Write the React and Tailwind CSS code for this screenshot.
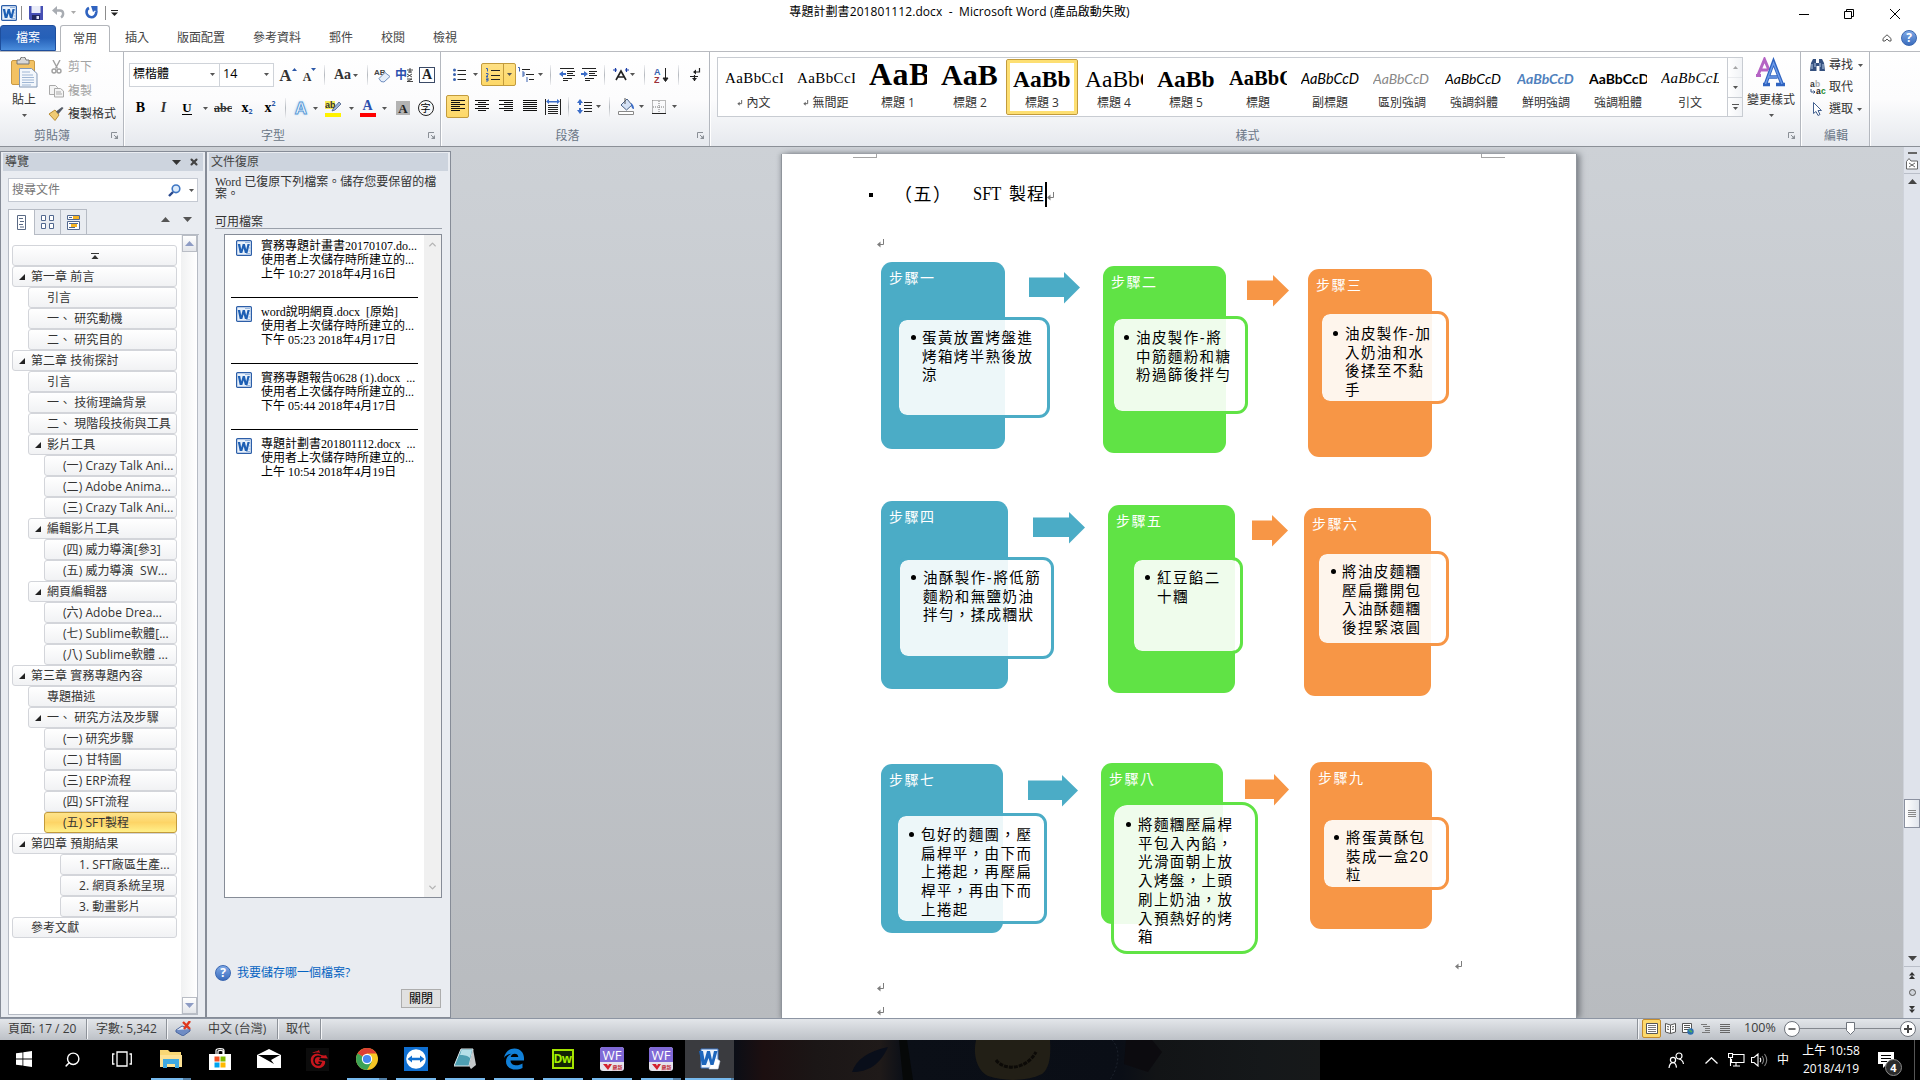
import React from "react";
import { Search, ChevronUp, ChevronDown, Minus, X } from "lucide-react";

const BLUE = "#4bacc6";
const GREEN = "#60e345";
const ORANGE = "#f79646";

/* ---------- small shared pieces ---------- */

function Caret({ className = "" }) {
  return (
    <svg width="5" height="3" viewBox="0 0 5 3" className={"shrink-0 " + className}>
      <path d="M0 0h5L2.500 3z" fill="#555" />
    </svg>
  );
}

function Cell({ className = "", children }) {
  return <div className={"flex h-full shrink-0 items-center justify-center " + className}>{children}</div>;
}

function Sep({ className = "w-[12px]" }) {
  return (
    <div className={"flex h-full shrink-0 items-center justify-center " + className}>
      <div className="h-[20px] w-px bg-linear-to-b from-[#f0f1f3] via-[#b5b9bf] to-[#f0f1f3]" />
    </div>
  );
}

function Launcher() {
  return (
    <svg width="8" height="8" viewBox="0 0 8 8">
      <path d="M.5 6V.5H6M3 3l3 3" stroke="#8a8f96" fill="none" />
      <path d="M7 3v4H3z" fill="#8a8f96" />
    </svg>
  );
}

function WordIcon({ size = 16 }) {
  return (
    <svg width={size} height={size} viewBox="0 0 16 16">
      <rect x=".6" y=".6" width="14.8" height="14.8" rx="1" fill="#e8f1fb" stroke="#2c5ea8" strokeWidth="1.2" />
      <path d="M9 2.500h5M10 13.500h4M13 5h1.500M13 8h1.500M12.500 11h2" stroke="#9cb9de" />
      <path d="M1.800 4h2.400l1 5.500L6.700 4h2.200l1.300 5.500L11.500 4h2.200l-2.200 9H8.900L7.700 8.200 6.300 13H3.700z" fill="#1d5fb4" />
    </svg>
  );
}

function ReturnMark({ className = "" }) {
  return (
    <svg width="8" height="9" viewBox="0 0 8 9" className={className}>
      <path d="M6.500 0v5.500H2" fill="none" stroke="#7d7d7d" />
      <path d="M0 5.500 3.500 2.500v6z" fill="#7d7d7d" />
    </svg>
  );
}

function HelpIcon() {
  return (
    <div className="flex size-[16px] shrink-0 items-center justify-center rounded-full border border-[#3a67b1] bg-linear-to-b from-[#7fa9e6] to-[#3a6cbd] font-['Open_Sans',sans-serif] text-[12px] leading-none font-bold text-white">
      ?
    </div>
  );
}

/* ---------- title bar and tabs ---------- */

function TitleBar() {
  return (
    <div className="flex h-[25px] items-center bg-white">
      <div className="flex h-[22px] w-[380px] items-center pl-px">
        <WordIcon />
        <div className="ml-[4px] h-[14px] w-px bg-[#8c8c8c]" />
        <svg className="ml-[7px]" width="14" height="14" viewBox="0 0 14 14">
          <path d="M0 0h14v14H1L0 13z" fill="#4650b4" />
          <path d="M2.500 0h9v7h-9z" fill="#e9ecf8" />
          <path d="M3 9h8v5H3z" fill="#20285e" />
          <path d="M7.500 10h2.500v3H7.500z" fill="#dfe3f5" />
        </svg>
        <svg className="ml-[9px]" width="13" height="13" viewBox="0 0 13 13">
          <path d="M3 4.500h5c4 0 4 5 1 7" fill="none" stroke="#a8acb2" strokeWidth="2.400" />
          <path d="M0 4.500 5 0v9z" fill="#a8acb2" />
        </svg>
        <Caret className="ml-[6px] opacity-50" />
        <svg className="ml-[9px]" width="13" height="13" viewBox="0 0 13 13">
          <path d="M4 2C.5 3.500.8 9 4.500 10.800c4 1.500 7.500-2 6.500-5.500" fill="none" stroke="#2f63c0" strokeWidth="2.600" />
          <path d="M6 0h6.500v6.500L10 4.500 8 6z" fill="#2f63c0" />
        </svg>
        <div className="ml-[7px] h-[14px] w-px bg-[#8c8c8c]" />
        <svg className="ml-[5px]" width="7" height="6" viewBox="0 0 7 6">
          <path d="M0 .5h7" stroke="#222" />
          <path d="M0 2.500h7L3.500 6z" fill="#222" />
        </svg>
      </div>
      <div className="flex h-full flex-1 items-center justify-center pb-px text-[12px] whitespace-pre text-black">
        <span className="tracking-[0.080px]">專題計劃書201801112.docx  -  Microsoft Word (產品啟動失敗)</span>
      </div>
      <div className="flex h-full w-[381px] items-center justify-end pt-[3px] pr-[20px] text-black">
        <div className="h-px w-[10px] bg-black" />
        <svg className="ml-[35px]" width="10" height="10" viewBox="0 0 10 10" fill="none" stroke="#000">
          <path d="M.5 2.500h7v7h-7zM2.500 2.500v-2h7v7h-2" />
        </svg>
        <svg className="ml-[36px]" width="10" height="10" viewBox="0 0 10 10" stroke="#000">
          <path d="M0 0l10 10M10 0L0 10" />
        </svg>
      </div>
    </div>
  );
}

function TabBar() {
  return (
    <div className="flex h-[27px] border-b border-[#b9bbc0] bg-white text-[12px] text-[#444]">
      <div className="flex h-[26px] w-[56px] items-center justify-center rounded-t-[3px] border border-[#1e4e9c] bg-linear-to-b from-[#2c62b8] via-[#2560b8] to-[#4a8ddc] text-white">檔案</div>
      <div className="ml-[4px] flex h-[27px] w-[50px] items-center justify-center rounded-t-[3px] border border-b-0 border-[#b3b6bb] bg-white pb-px">常用</div>
      <div className="flex flex-1 items-center pb-px">
        <span className="ml-[15px] w-[52px]">插入</span>
        <span className="w-[76px]">版面配置</span>
        <span className="w-[76px]">參考資料</span>
        <span className="w-[52px]">郵件</span>
        <span className="w-[52px]">校閱</span>
        <span>檢視</span>
      </div>
      <div className="flex items-center gap-[9px] pr-[3px]">
        <svg width="10" height="8" viewBox="0 0 10 8" fill="none" stroke="#555">
          <path d="M1 4.500 5 .8l4 3.700v2.500H7L5 5 3 7H1z" />
        </svg>
        <HelpIcon />
      </div>
    </div>
  );
}

/* ---------- ribbon ---------- */

function Group({ className, label, launcher = true, labelClass = "", children }) {
  return (
    <div className={"flex h-[94px] shrink-0 flex-col border-r border-[#b4b8bf] shadow-[1px_0_0_#fff] " + className}>
      <div className="h-[74px]">{children}</div>
      <div className="flex h-[19px] items-center pr-[4px] text-[12px] text-[#6a7686]">
        <span className={"flex-1 text-center " + labelClass}>{label}</span>
        {launcher && <Launcher />}
      </div>
    </div>
  );
}

function Clipboard() {
  return (
    <Group className="w-[124px]" label="剪貼簿" labelClass="pr-[7px]">
      <div className="flex h-full">
        <div className="flex w-[48px] flex-col items-center pt-[5px] text-[12px] text-[#333]">
          <svg width="27" height="31" viewBox="0 0 27 31">
            <rect x=".5" y="3.500" width="23" height="24" rx="1.500" fill="#f3c263" stroke="#c99a45" />
            <path d="M6 3h3a3 3 0 0 1 6 0h3v4H6z" fill="#d8d8d8" stroke="#777" />
            <path d="M8.500 11.500h12l5.500 5V30H8.500z" fill="#f3f7fc" stroke="#8197b5" />
            <path d="M11 15h8M11 18h11M11 20.500h12M11 23h12M11 25.500h12M11 28h9" stroke="#9fb6d4" />
          </svg>
          <span className="mt-[2px] leading-[20px]">貼上</span>
          <Caret className="mt-[4px]" />
        </div>
        <div className="flex flex-col pt-[3px] text-[12px] text-[#a3a3a3]">
          <div className="flex h-[24px] items-center">
            <svg width="20" height="14" viewBox="0 0 20 14" fill="none" stroke="#a0a0a0" strokeWidth="1.400">
              <path d="M5 0l4.500 8.500M12 0 7.500 8.500" />
              <circle cx="6" cy="11" r="2" />
              <circle cx="11" cy="11" r="2" />
            </svg>
            剪下
          </div>
          <div className="flex h-[24px] items-center">
            <svg width="20" height="14" viewBox="0 0 20 14" fill="#f4f4f4" stroke="#a9a9a9">
              <path d="M1.500 1.500h6l2 2v7h-8z" />
              <path d="M6.500 4.500h6l3 2.500v6h-9zM8 8h5M8 10h6" />
            </svg>
            複製
          </div>
          <div className="flex h-[22px] items-center text-[#333]">
            <svg width="20" height="14" viewBox="0 0 20 14">
              <path d="M1 7 7 3l4 5-4 5.500z" fill="#f0cb74" stroke="#b98d33" />
              <path d="M8 4.500 10.500 7l5-6-1.500-1z" fill="#555b66" />
            </svg>
            複製格式
          </div>
        </div>
      </div>
    </Group>
  );
}

const serif = "font-['Liberation_Serif',serif] leading-none ";

function FontGroup() {
  return (
    <Group className="w-[317px]" label="字型" labelClass="pr-[6px]">
      <div className="flex h-full flex-col pt-[11px] pl-[5px]">
        <div className="flex h-[24px] text-[12px] text-black">
          <div className="flex h-full w-[91px] items-center justify-between border border-[#cfd3d9] bg-white pr-[4px] pb-[2px] pl-[3px]">
            標楷體 <Caret />
          </div>
          <div className="-ml-px flex h-full w-[55px] items-center justify-between border border-[#cfd3d9] bg-white pr-[4px] pb-[2px] pl-[3px] text-[12.500px]">
            14 <Caret />
          </div>
          <Cell className="w-[26px] pl-[2px]">
            <span className={serif + "text-[17px] font-bold text-[#333]"}>A</span>
            <svg className="-mt-[12px]" width="5" height="3"><path d="M0 3h5L2.500 0z" fill="#2b57a7" /></svg>
          </Cell>
          <Cell className="w-[19px]">
            <span className={serif + "mt-[3px] text-[12px] font-bold text-[#333]"}>A</span>
            <svg className="-mt-[12px]" width="5" height="3"><path d="M0 0h5L2.500 3z" fill="#2b57a7" /></svg>
          </Cell>
          <Sep className="w-[11px]" />
          <Cell className="w-[32px] gap-[2px]">
            <span className={serif + "text-[14px] font-bold text-[#333]"}>Aa</span>
            <Caret />
          </Cell>
          <Sep className="w-[10px]" />
          <Cell className="w-[20px]">
            <svg width="17" height="16" viewBox="0 0 17 16">
              <text x="0" y="8" fontSize="8" fontWeight="bold" fontFamily="Liberation Sans" fill="#444">AB</text>
              <path d="M5 11.500 11 5.500l5 4-6 5.500-3-.5z" fill="#e6eefa" stroke="#6f8ec0" />
            </svg>
          </Cell>
          <Cell className="w-[22px] pl-[2px]">
            <span className="text-[12px] font-bold text-[#2b4fae]">中</span>
            <svg width="6" height="14" viewBox="0 0 6 14" stroke="#333" fill="none"><path d="M0 2h6M3 0v5M1 4l4 0M0 6l5 3M5 6 0 9M0 11h5l-5 2.500h6" strokeWidth=".9" /></svg>
          </Cell>
          <Cell className="w-[24px] pl-[2px]">
            <div className={serif + "flex size-[16px] items-center justify-center border border-[#3b4a66] bg-white text-[14px] font-bold text-[#222]"}>A</div>
          </Cell>
        </div>
        <div className="mt-[9px] flex h-[24px]">
          <Cell className="w-[23px]"><span className={serif + "text-[14px] font-bold"}>B</span></Cell>
          <Cell className="w-[23px]"><span className={serif + "text-[14px] font-bold italic text-[#333]"}>I</span></Cell>
          <Cell className="w-[24px]"><span className={serif + "border-b border-black text-[13px] font-bold"}>U</span></Cell>
          <Cell className="w-[12px]"><Caret /></Cell>
          <Cell className="w-[24px]"><span className={serif + "text-[12px] font-bold text-[#333] line-through"}>abc</span></Cell>
          <Cell className="w-[24px]"><span className={serif + "text-[14px] font-bold"}>x</span><span className="mt-[8px] text-[7px] font-bold text-[#2b57a7]">2</span></Cell>
          <Cell className="w-[22px]"><span className={serif + "text-[14px] font-bold"}>x</span><span className="mb-[8px] text-[7px] font-bold text-[#2b57a7]">2</span></Cell>
          <Sep className="w-[8px]" />
          <Cell className="w-[24px]">
            <span className="font-['Liberation_Sans',sans-serif] text-[17px] leading-none font-bold text-white [-webkit-text-stroke:1px_#5a9bd8] [text-shadow:0_0_3px_#7db7ea]">A</span>
          </Cell>
          <Cell className="w-[5px]"><Caret /></Cell>
          <Cell className="ml-[4px] w-[22px]">
            <svg width="17" height="17" viewBox="0 0 17 17">
              <path d="M0 1h10v8H0z" fill="#f5ec55" />
              <text x="0" y="8" fontSize="9" fontWeight="bold" fontFamily="Liberation Sans" fill="#333">ab</text>
              <path d="m8 9 6-7 2 2-6 6-3 1z" fill="#9db4d8" stroke="#4a5f86" strokeWidth=".8" />
              <path d="M0 13h16v4H0z" fill="#fff200" />
            </svg>
          </Cell>
          <Cell className="w-[10px] pl-[4px]"><Caret /></Cell>
          <Cell className="w-[25px] pl-[2px]">
            <div className="flex h-[17px] w-[16px] flex-col items-center justify-end border-b-4 border-[#ff0000]">
              <span className={serif + "text-[14px] font-bold text-[#2b4fae]"}>A</span>
            </div>
          </Cell>
          <Cell className="w-[10px]"><Caret /></Cell>
          <Cell className="w-[26px] pl-[2px]">
            <div className={serif + "flex size-[14px] items-center justify-center bg-[#b3b3b3] text-[13px] font-bold text-[#222]"}>A</div>
          </Cell>
          <Cell className="w-[21px]">
            <div className="flex size-[16px] shrink-0 items-center justify-center rounded-full border border-[#222] text-[10px] leading-none">字</div>
          </Cell>
        </div>
      </div>
    </Group>
  );
}

function Lines({ w = 14, rows, color = "#111" }) {
  return (
    <svg width={w} height={rows.length * 2 + 1} viewBox={`0 0 ${w} ${rows.length * 2 + 1}`} stroke={color}>
      {rows.map(([a, b], i) => <path key={i} d={`M${a} ${i * 2 + 0.5}H${b}`} />)}
    </svg>
  );
}

const selected = "rounded-[2px] border border-[#c29b3c] bg-linear-to-b from-[#fee084] to-[#fdd868] ";

function ParagraphGroup() {
  return (
    <Group className="w-[269px]" label="段落" labelClass="pr-[3px]">
      <div className="flex h-full flex-col pt-[11px]">
        <div className="flex h-[23px]">
          <Cell className="ml-[9px] w-[18px]">
            <svg width="13" height="13" viewBox="0 0 13 13"><path d="M4.500 2.500H13M4.500 6.500H13M4.500 11.500H13" stroke="#222" /><g fill="#3a63b0"><circle cx="1.500" cy="2" r="1.500" /><circle cx="1.500" cy="6.500" r="1.500" /><circle cx="1.500" cy="11.500" r="1.500" /></g></svg>
          </Cell>
          <Cell className="w-[13px] pl-[2px]"><Caret /></Cell>
          <div className={selected + "flex h-[23px] w-[35px]"}>
            <Cell className="w-[22px] border-r border-[#c29b3c]">
              <svg width="14" height="14" viewBox="0 0 14 14"><path d="M5 2.500h9M5 7.500h9M5 11.500h9" stroke="#222" /><g fill="none" stroke="#3a63b0"><path d="M0 .5h1.500v3M0 5.500h2v1.500l-2 1.500h2M0 10h2v3H0M0 11.500h2" /></g></svg>
            </Cell>
            <Cell className="w-[11px]"><Caret /></Cell>
          </div>
          <Cell className="w-[20px]">
            <svg width="17" height="15" viewBox="0 0 17 15"><path d="M4 2.500h8M8 7.500h8M11 12.500h5" stroke="#222" /><g stroke="#3a63b0" fill="none"><path d="M0 .5h1.500v4M4 5h2v4H4M4 7h2M9 10v5" /></g></svg>
          </Cell>
          <Cell className="w-[8px]"><Caret /></Cell>
          <Sep className="w-[13px]" />
          <Cell className="w-[20px]">
            <svg width="16" height="13" viewBox="0 0 16 13"><path d="M1 .5h14M8 3.500h8M8 5.500h6M8 7.500h8M4 10.500h9M4 12.500h5" stroke="#222" /><path d="M0 6l4-3v2h3v2H4v2z" fill="#3a6cc8" /></svg>
          </Cell>
          <Cell className="w-[24px]">
            <svg width="16" height="13" viewBox="0 0 16 13"><path d="M1 .5h14M8 3.500h8M8 5.500h6M8 7.500h8M4 10.500h9M4 12.500h5" stroke="#222" /><path d="M7 6 3 3v2H0v2h3v2z" fill="#3a6cc8" /></svg>
          </Cell>
          <Sep className="w-[6px]" />
          <Cell className="w-[23px] pl-[5px]">
            <svg className="shrink-0" width="16" height="13" viewBox="0 0 16 13"><path d="M3 12 8 3l5 9M5 9h6" stroke="#222" strokeWidth="1.600" fill="none" /><path d="M0 2h4M2.500 0v4M12 2h4M13.500 0v4" stroke="#1c3fa8" strokeWidth="1.200" /></svg>
          </Cell>
          <Cell className="w-[5px]"><Caret /></Cell>
          <Sep className="w-[18px]" />
          <Cell className="w-[17px]">
            <svg width="15" height="16" viewBox="0 0 15 16">
              <text x="0" y="7.500" fontSize="9" fontWeight="bold" fontFamily="Liberation Sans" fill="#3a63b0">A</text>
              <text x="0" y="16" fontSize="9" fontWeight="bold" fontFamily="Liberation Sans" fill="#9c3038">Z</text>
              <path d="M11.500 1v12M9 11l2.500 3.500L14 11z" stroke="#222" fill="#222" />
            </svg>
          </Cell>
          <Sep className="w-[16px]" />
          <Cell className="w-[19px]">
            <svg width="11" height="13" viewBox="0 0 11 13"><path d="M9.500 0v4H4M0 8.500h8M4.500 7v6" stroke="#222" fill="none" strokeWidth="1.200" /><path d="M3 4l3-2.500v5zM4.500 13 2 10h5z" fill="#222" /></svg>
          </Cell>
        </div>
        <div className="mt-[9px] flex h-[23px]">
          <div className={selected + "ml-[5px] flex h-[23px] w-[23px] items-center justify-center"}>
            <Lines rows={[[0, 14], [0, 9], [0, 14], [0, 9], [0, 14], [0, 9]]} />
          </div>
          <Cell className="w-[26px]"><Lines rows={[[0, 14], [3, 11], [0, 14], [3, 11], [0, 14], [3, 11]]} /></Cell>
          <Cell className="w-[22px]"><Lines rows={[[0, 14], [5, 14], [0, 14], [5, 14], [0, 14], [5, 14]]} /></Cell>
          <Cell className="w-[25px]"><Lines rows={[[0, 14], [0, 14], [0, 14], [0, 14], [0, 14], [0, 14]]} /></Cell>
          <Cell className="w-[22px]">
            <svg width="16" height="16" viewBox="0 0 16 16"><path d="M.5 0v16M15.500 0v16M3 6.500h10M3 8.500h10M3 10.500h10M3 12.500h10M3 14.500h10" stroke="#222" /><path d="M1 2.500 4 0v2h8V0l3 2.500L12 5V3.500H4V5z" fill="#3a6cc8" /></svg>
          </Cell>
          <Sep className="w-[8px]" />
          <Cell className="w-[24px] pl-[2px]">
            <svg width="16" height="15" viewBox="0 0 16 15"><path d="M7 3.500h8M7 6.500h8M7 9.500h8M7 12.500h8" stroke="#222" /><path d="M3 0 0 4h2v2h2V4h2zM3 15l-3-4h2V9h2v2h2z" fill="#3a6cc8" /></svg>
          </Cell>
          <Cell className="w-[5px]"><Caret /></Cell>
          <Sep className="w-[16px]" />
          <Cell className="w-[18px]">
            <svg width="17" height="17" viewBox="0 0 17 17"><path d="M3 7 9 1l5 6-5.500 5z" fill="#d5e2f6" stroke="#4a6287" /><path d="M7 0v6" stroke="#555" /><path d="M13 5c3 2 3 5 3 6-2 0-3-2-3-6z" fill="#3a6cc8" /><path d="M.5 13.500h15v3H.5z" fill="#fff" stroke="#888" /></svg>
          </Cell>
          <Cell className="w-[13px]"><Caret /></Cell>
          <Cell className="w-[22px]">
            <svg width="14" height="14" viewBox="0 0 14 14" fill="none" stroke="#777"><path d="M.5.5h13v13M.5.5v13M7 1v12M1 7h12" strokeDasharray="1 1" /><path d="M0 13.500h14" stroke="#222" /></svg>
          </Cell>
          <Cell className="w-[9px]"><Caret /></Cell>
        </div>
      </div>
    </Group>
  );
}

const styleItems = [
  ["AaBbCcI", "內文", "font-['Liberation_Serif',serif] text-[15px] tracking-[0.400px]", "mt-[10px]", true],
  ["AaBbCcI", "無間距", "font-['Liberation_Serif',serif] text-[15px] tracking-[0.400px]", "mt-[10px]", true],
  ["AaB", "標題 1", "font-['Liberation_Serif',serif] text-[32px] font-bold tracking-[0.500px]", "-mt-[4px]"],
  ["AaB", "標題 2", "font-['Liberation_Serif',serif] text-[30px] font-bold", "-mt-[2px]"],
  ["AaBb", "標題 3", "font-['Liberation_Serif',serif] text-[23.500px] font-bold", "mt-[6px]"],
  ["AaBbC", "標題 4", "font-['Liberation_Serif',serif] text-[23.500px]", "mt-[6px]"],
  ["AaBb", "標題 5", "font-['Liberation_Serif',serif] text-[23.500px] font-bold", "mt-[6px]"],
  ["AaBbC", "標題", "font-['Liberation_Serif',serif] text-[20.500px] font-bold", "mt-[7px]"],
  ["AaBbCcD", "副標題", "font-['Lato',sans-serif] text-[14.500px] italic", "mt-[11px]"],
  ["AaBbCcD", "區別強調", "font-['Lato',sans-serif] text-[14px] italic text-[#888]", "mt-[11px]"],
  ["AaBbCcD", "強調斜體", "font-['Lato',sans-serif] text-[14px] italic", "mt-[11px]"],
  ["AaBbCcD", "鮮明強調", "font-['Lato',sans-serif] text-[14px] font-bold italic text-[#4f81bd]", "mt-[11px]"],
  ["AaBbCcD", "強調粗體", "font-['Lato',sans-serif] text-[14px] font-bold", "mt-[11px]"],
  ["AaBbCcL", "引文", "font-['Liberation_Serif',serif] text-[15px] italic tracking-[0.300px]", "mt-[10px]"],
];

function StylesGroup() {
  return (
    <Group className="w-[1091px]" label="樣式" labelClass="pr-[3px]">
      <div className="flex pt-[5px] pl-[7px]">
        <div className="flex h-[60px] w-[1011px] border border-[#c8ccd2] bg-white">
          {styleItems.map(([sample, name, cls, mt, mark], i) => (
            <div
              key={i}
              className={
                "mt-px flex h-[56px] w-[72px] shrink-0 flex-col items-center rounded-[2px] " +
                (i === 4 ? "border border-[#c29b3c] shadow-[inset_0_0_0_3px_#fddf72]" : "border border-transparent")
              }
            >
              <div className="flex h-[33px] w-[58px] items-start overflow-hidden text-black">
                <div className={cls + " leading-[1.150] whitespace-nowrap " + mt}>{sample}</div>
              </div>
              <div className="mt-px flex items-center text-[12px] leading-[18px] text-[#333]">
                {mark && <svg className="mr-[3px]" width="6" height="6" viewBox="0 0 8 9"><path d="M6.500 0v5.500H2" fill="none" stroke="#666" strokeWidth="1.500" /><path d="M0 5.500 3.500 2.500v6z" fill="#666" /></svg>}
                {name}
              </div>
            </div>
          ))}
        </div>
        <div className="flex h-[60px] w-[15px] flex-col border border-l-0 border-[#c8ccd2] bg-linear-to-r from-white to-[#f1f3f6]">
          <div className="flex h-[20px] items-center justify-center border-b border-[#dadde2] opacity-50"><Caret className="rotate-180" /></div>
          <div className="flex h-[20px] items-center justify-center border-b border-[#c8ccd2]"><Caret /></div>
          <div className="flex flex-1 flex-col items-center justify-center gap-[2px]"><div className="h-px w-[7px] bg-[#555]" /><Caret /></div>
        </div>
        <div className="flex w-[56px] flex-col items-center text-[12px] text-[#333]">
          <svg width="30" height="30" viewBox="0 0 30 30">
            <path d="M0 18.500h5M2 18 8.500 2.500 13 13M5 13h7" fill="none" strokeWidth="3" stroke="#b564c4" />
            <path d="M7 27.500h7M20 27.500h9M9.500 27 17.500 5l8.500 22M12.500 20h9" fill="none" stroke="#2f63c0" strokeWidth="3.600" />
            <path d="M9.500 27 17.500 6l8.500 21M12.500 20h9" fill="none" stroke="#6d9be8" strokeWidth="1.400" />
          </svg>
          <span className="mt-[3px] leading-[20px] whitespace-nowrap">變更樣式</span>
          <Caret className="mt-[4px]" />
        </div>
      </div>
    </Group>
  );
}

function EditingGroup() {
  return (
    <Group className="w-[69px]" label="編輯" labelClass="pl-[6px]" launcher={false}>
      <div className="flex flex-col gap-[4px] pt-[4px] pl-[9px] text-[12px] text-[#333]">
        <div className="flex h-[18px] items-center">
          <svg width="15" height="14" viewBox="0 0 15 14"><path d="M1 5 3 1h3v4h3V1h3l2 4 1 8h-5.500V8h-3v5H0z" fill="#34507f" /><path d="M2 6v5M5 5v4M10 5v4M13 6v5" stroke="#b7cbe8" /></svg>
          <span className="ml-[4px]">尋找</span><Caret className="ml-[5px]" />
        </div>
        <div className="flex h-[18px] items-center">
          <svg width="16" height="15" viewBox="0 0 16 15" fontFamily="Liberation Sans" fontWeight="bold" fontSize="8.500">
            <text x="0" y="7" fill="#333">a</text><text x="5" y="7" fill="#aaa">b</text><text x="6" y="14" fill="#222">a</text><text x="11" y="14" fill="#1d8a2c">c</text>
            <path d="M1 9v3h4M3.500 10.500 5 12l-1.500 1.500" stroke="#34507f" fill="none" />
          </svg>
          <span className="ml-[3px]">取代</span>
        </div>
        <div className="flex h-[18px] items-center">
          <svg width="16" height="14" viewBox="0 0 16 14"><path d="M3.500.5v11l2.500-2 2 4 2-1-2-4h3.500z" fill="#fff" stroke="#43608f" /></svg>
          <span className="ml-[3px]">選取</span><Caret className="ml-[4px]" />
        </div>
      </div>
    </Group>
  );
}

function Ribbon() {
  return (
    <div className="flex h-[95px] border-b border-[#8b9097] bg-linear-to-b from-white via-[#fcfcfd] to-[#e6e9ee]">
      <Clipboard />
      <FontGroup />
      <ParagraphGroup />
      <StylesGroup />
      <EditingGroup />
    </div>
  );
}

/* ---------- navigation pane ---------- */

const outline = [
  [0, "第一章 前言", true], [1, "引言"], [1, "一、 研究動機"], [1, "二、 研究目的"],
  [0, "第二章 技術探討", true], [1, "引言"], [1, "一、 技術理論背景"], [1, "二、 現階段技術與工具"],
  [1, "影片工具", true], [2, "(一) Crazy Talk Ani..."], [2, "(二) Adobe Anima..."], [2, "(三) Crazy Talk Ani..."],
  [1, "編輯影片工具", true], [2, "(四) 威力導演[參3]"], [2, "(五) 威力導演  SW..."],
  [1, "網頁編輯器", true], [2, "(六) Adobe Drea..."], [2, "(七) Sublime軟體[..."], [2, "(八) Sublime軟體 ..."],
  [0, "第三章 實務專題內容", true], [1, "專題描述"], [1, "一、 研究方法及步驟", true],
  [2, "(一) 研究步驟"], [2, "(二) 甘特圖"], [2, "(三) ERP流程"], [2, "(四) SFT流程"], [2, "(五) SFT製程", false, true],
  [0, "第四章 預期結果", true], [3, "1. SFT廠區生產..."], [3, "2. 網頁系統呈現"], [3, "3. 動畫影片"], [0, "參考文獻"],
];
const indent = ["ml-0", "ml-[16px]", "ml-[32px]", "ml-[48px]"];

function ListButton({ up }) {
  return (
    <div className="flex h-[17px] w-[15px] items-center justify-center border border-[#b9bdc5] bg-linear-to-b from-white to-[#e4e6ea]">
      <svg width="9" height="5" viewBox="0 0 9 5">{up ? <path d="M0 5h9L4.500 0z" fill="#8e9cc4" /> : <path d="M0 0h9L4.500 5z" fill="#8e9cc4" />}</svg>
    </div>
  );
}

function NavigationPane() {
  return (
    <div className="flex h-[867px] w-[206px] flex-col border border-[#868c97] bg-[#e9ecf1] px-[2px] pt-px">
      <div className="flex h-[18px] items-center bg-[#cdd4de] pl-[2px] text-[12px] text-[#444]">
        <span className="flex-1">導覽</span>
        <svg width="9" height="5" viewBox="0 0 9 5"><path d="M0 0h9L4.500 5z" fill="#333" /></svg>
        <X className="mr-[4px] ml-[8px]" size={10} strokeWidth={5} color="#444" />
      </div>
      <div className="mt-[7px] ml-[5px] flex h-[24px] w-[190px] items-center border border-[#c4c9d2] bg-white pl-[3px] text-[12px] text-[#777]">
        <span className="flex-1">搜尋文件</span>
        <svg width="13" height="13" viewBox="0 0 13 13"><circle cx="8" cy="4.800" r="3.800" fill="#dcebfb" stroke="#3f77c4" strokeWidth="1.600" /><path d="M5 8 1 12" stroke="#27478c" strokeWidth="2.400" /></svg>
        <Caret className="mr-[3px] ml-[8px]" />
      </div>
      <div className="mt-[7px] ml-[5px] flex h-[26px] shrink-0">
        <div className="flex w-[27px] items-center justify-center border border-b-0 border-[#b6bbc4] bg-white">
          <svg width="9" height="15" viewBox="0 0 9 15" fill="#fff" stroke="#5a6a85"><path d="M.5.5h8v14h-8zM2 3.500h4M3 6.500h4M2 9.500h4M3 12h4" /></svg>
        </div>
        <div className="flex w-[26px] items-center justify-center border-t border-r border-b border-[#b6bbc4]">
          <svg width="13" height="14" viewBox="0 0 13 14" fill="#fff" stroke="#52688f"><path d="M.5.500h4v5h-4zM8.500.5h4v5h-4zM.5 8.500h4v5h-4zM8.500 8.500h4v5h-4z" /></svg>
        </div>
        <div className="flex w-[26px] items-center justify-center border-t border-r border-b border-[#b6bbc4]">
          <svg width="13" height="15" viewBox="0 0 13 15"><path d="M.5.500h12v4H.5zM.5 6.500h12v8H.5z" fill="#fff" stroke="#52688f" /><path d="M6 1h6v3H6zM4 9h6v3H4z" fill="#f5b324" /><path d="M2 2.500h3M2 8.500h9M2 12.500h6" stroke="#52688f" /></svg>
        </div>
        <div className="mr-[4px] flex flex-1 items-center justify-end gap-[13px] border-b border-[#b6bbc4] pr-[7px] pb-[4px]">
          <svg width="9" height="5" viewBox="0 0 9 5"><path d="M0 5h9L4.500 0z" fill="#555" /></svg>
          <svg width="9" height="5" viewBox="0 0 9 5"><path d="M0 0h9L4.500 5z" fill="#555" /></svg>
        </div>
      </div>
      <div className="ml-[5px] flex h-[780px] w-[190px] shrink-0 border border-t-0 border-[#b6bbc4] bg-white">
        <div className="w-[172px] pt-[10px] pl-[3px]">
          <div className="flex h-[21px] w-[165px] items-center justify-center rounded-[3px] border border-[#d3d5da] bg-linear-to-b from-white to-[#f1f2f4]">
            <svg width="8" height="6" viewBox="0 0 8 6"><path d="M0 .5h8" stroke="#333" /><path d="M.5 6h7L4 2z" fill="#333" /></svg>
          </div>
          <div className="flex w-[165px] flex-col">
            {outline.map(([level, text, open, active], i) => (
              <div
                key={i}
                className={
                  "flex h-[21px] items-center rounded-[3px] border text-[12px] whitespace-pre text-[#333] " +
                  indent[level] +
                  (active
                    ? " border-[#c29b3c] bg-linear-to-b from-[#fee48b] via-[#fdd466] to-[#fff08a]"
                    : " border-[#d3d5da] bg-linear-to-b from-white to-[#f1f2f4]")
                }
              >
                <span className="w-[18px] shrink-0 pl-[6px]">
                  {open && <svg width="7" height="6" viewBox="0 0 7 6"><path d="M0 6h6V0z" fill="#222" /></svg>}
                </span>
                <span className="tracking-[0.060px]">{text}</span>
              </div>
            ))}
          </div>
        </div>
        <div className="flex w-[16px] flex-col items-center justify-between bg-linear-to-r from-[#f0f1f2] to-white">
          <ListButton up />
          <ListButton />
        </div>
      </div>
    </div>
  );
}

/* ---------- recovery pane ---------- */

const files = [
  ["實務專題計畫書20170107.do...", "上午 10:27 2018年4月16日"],
  ["word說明網頁.docx  [原始]", "下午 05:23 2018年4月17日"],
  ["實務專題報告0628 (1).docx  ...", "下午 05:44 2018年4月17日"],
  ["專題計劃書201801112.docx  ...", "上午 10:54 2018年4月19日"],
];

function RecoveryPane() {
  return (
    <div className="flex h-[867px] w-[245px] flex-col border border-[#868c97] bg-[#e9ecf1] px-[2px] pt-px text-black">
      <div className="flex h-[18px] shrink-0 items-center bg-[#cdd4de] pl-[2px] text-[12px] text-[#444]">文件復原</div>
      <div className="mt-[5px] ml-[6px] h-[26px] font-['Liberation_Serif','Noto_Sans_CJK_TC',serif] text-[12px] leading-[12px] whitespace-nowrap text-[#333]">
        <div className="leading-[12px]">Word 已復原下列檔案。儲存您要保留的檔</div>
        <div className="leading-[12px]">案。</div>
      </div>
      <div className="mt-[13px] ml-[6px] flex h-[14px] w-[227px] items-center border-b border-[#9aa0aa] text-[12px] text-[#333]">可用檔案</div>
      <div className="mt-[5px] ml-[15px] flex h-[664px] w-[218px] shrink-0 border border-[#868c97] bg-white">
        <div className="flex-1 pl-[6px]">
          {files.map(([name, time], i) => (
            <div key={i} className={"flex h-[66px] w-[187px] pt-[7px] pl-[5px] " + (i === 0 ? "-mt-[3px] " : "") + (i < 3 ? "border-b border-black" : "")}>
              <div className="h-[16px] w-[25px] pt-px"><WordIcon /></div>
              <div className="font-['Liberation_Serif','Noto_Sans_CJK_TC',serif] text-[12px] leading-[14px] whitespace-pre">
                <div>{name}</div>
                <div>使用者上次儲存時所建立的...</div>
                <div>{time}</div>
              </div>
            </div>
          ))}
        </div>
        <div className="flex w-[17px] flex-col items-center justify-between bg-[#f0f0f0] py-[4px]">
          <ChevronUp size={11} strokeWidth={3} color="#b4b4b4" />
          <ChevronDown size={11} strokeWidth={3} color="#b4b4b4" />
        </div>
      </div>
      <div className="mt-[67px] ml-[6px] flex h-[16px] items-center gap-[6px] text-[12px] text-[#0563c1]">
        <HelpIcon />
        <span>我要儲存哪一個檔案?</span>
      </div>
      <div className="mt-[8px] ml-[192px] flex h-[19px] w-[40px] shrink-0 items-center justify-center border border-[#adadad] bg-[#e1e1e1] text-[12px]">關閉</div>
    </div>
  );
}

/* ---------- document ---------- */

const steps = [
  { c: BLUE, n: [881, 262, 124, 187], t: "步驟一", b: [896, 317, 154, 101], x: [911, 922, 338], l: ["蛋黃放置烤盤進", "烤箱烤半熟後放", "涼"] },
  { c: GREEN, n: [1103, 266, 123, 187], t: "步驟二", b: [1111, 316, 137, 98], x: [1124, 1136, 338], l: ["油皮製作-將", "中筋麵粉和糖", "粉過篩後拌勻"] },
  { c: ORANGE, n: [1308, 269, 124, 188], t: "步驟三", b: [1319, 311, 130, 93], x: [1333, 1345, 334], l: ["油皮製作-加", "入奶油和水", "後揉至不黏", "手"] },
  { c: BLUE, n: [881, 501, 127, 188], t: "步驟四", b: [897, 557, 157, 102], x: [911, 923, 578], l: ["油酥製作-將低筋", "麵粉和無鹽奶油", "拌勻，揉成糰狀"] },
  { c: GREEN, n: [1108, 505, 127, 188], t: "步驟五", b: [1131, 557, 112, 97], x: [1145, 1157, 578], l: ["紅豆餡二", "十糰"] },
  { c: ORANGE, n: [1304, 508, 127, 188], t: "步驟六", b: [1316, 551, 133, 95], x: [1331, 1342, 572], l: ["將油皮麵糰", "壓扁攤開包", "入油酥麵糰", "後捏緊滾圓"] },
  { c: BLUE, n: [881, 764, 122, 169], t: "步驟七", b: [895, 813, 152, 111], x: [909, 921, 835], l: ["包好的麵團，壓", "扁桿平，由下而", "上捲起，再壓扁", "桿平，再由下而", "上捲起"] },
  { c: GREEN, n: [1101, 763, 122, 161], t: "步驟八", b: [1111, 802, 147, 152], r: 16, x: [1126, 1138, 825], l: ["將麵糰壓扁桿", "平包入內餡，", "光滑面朝上放", "入烤盤，上頭", "刷上奶油，放", "入預熱好的烤", "箱"] },
  { c: ORANGE, n: [1310, 762, 122, 167], t: "步驟九", b: [1321, 817, 128, 73], x: [1334, 1346, 838], l: ["將蛋黃酥包", "裝成一盒20", "粒"] },
];

const arrows = [
  [1029, 272, 51, 35, BLUE], [1247, 275, 42, 26, ORANGE],
  [1033, 512, 52, 36, BLUE], [1252, 515, 36, 20, ORANGE],
  [1028, 775, 50, 34, BLUE], [1245, 774, 44, 29, ORANGE],
];

const marks = [[877, 239], [1455, 961], [877, 983], [877, 1007]];
const PX = 782;
const PY = 154;

function Step({ s }) {
  const [nx, ny, nw, nh] = s.n;
  const [bx, by, bw, bh] = s.b;
  const [dot, tx, ty] = s.x;
  return (
    <>
      <div
        className="absolute rounded-[11px] pt-[6px] pl-[8px] text-[14px] leading-[19px] tracking-[1.500px] text-white"
        style={{ left: nx - PX, top: ny - PY, width: nw, height: nh, background: s.c }}
      >
        {s.t}
      </div>
      <div
        className="absolute border-3 bg-white/90 bg-clip-padding"
        style={{ left: bx - PX, top: by - PY, width: bw, height: bh, borderColor: s.c, borderRadius: s.r || 11 }}
      />
      <div className="absolute size-[5px] rounded-full bg-black" style={{ left: dot - PX, top: ty - PY - 3 }} />
      <div className="absolute text-[14.500px] leading-[18.700px] tracking-[1.400px] whitespace-nowrap text-black" style={{ left: tx - PX, top: ty - PY - 9 }}>
        {s.l.map((line) => <div key={line}>{line}</div>)}
      </div>
    </>
  );
}

function Page() {
  return (
    <div className="relative ml-[331px] h-[864px] w-[794px] shrink-0 self-end bg-white font-['Lato','Noto_Sans_CJK_TC',sans-serif] shadow-[-1px_0_0_#8f949b,1px_0_0_#8f949b,4px_0_6px_rgba(60,65,72,0.550),-2px_0_4px_rgba(60,65,72,0.300)]">
      <div className="flex h-[4px] justify-between pr-[71px] pl-[71px]">
        <div className="h-[4px] w-[24px] border-r border-b border-[#a5a5a5]" />
        <div className="h-[4px] w-[24px] border-b border-l border-[#a5a5a5]" />
      </div>
      <div className="flex h-[25px] translate-y-[24px] items-center font-['Liberation_Serif','Noto_Sans_CJK_TC',serif] text-[18.667px] leading-none text-black">
        <div className="ml-[87px] size-[4px] bg-black" />
        <span className="ml-[21px] w-[77px] text-[18px] tracking-[1.500px] whitespace-nowrap">（五）</span>
        <span className="ml-[2px] w-[36px] origin-left scale-x-88">SFT</span>
        <span className="w-[36px] text-[17px] tracking-[1px] whitespace-nowrap">製程</span>
        <div className="h-[25px] w-[2px] bg-black" />
        <ReturnMark className="mt-[3px]" />
      </div>
      {steps.map((s) => <Step key={s.t} s={s} />)}
      {arrows.map(([x, y, w, neck, c], i) => (
        <svg key={i} className="absolute" style={{ left: x - PX, top: y - PY }} width={w} height="32" viewBox={`0 0 ${w} 32`}>
          <path d={`M0 5.500H${neck}V0L${w} 15.500 ${neck} 31.500V25H0z`} fill={c} />
        </svg>
      ))}
      {marks.map(([x, y], i) => (
        <div key={i} className="absolute" style={{ left: x - PX, top: y - PY }}><ReturnMark /></div>
      ))}
    </div>
  );
}

function PageScroll() {
  return (
    <div className="flex h-[871px] w-[17px] flex-col items-center border-l border-[#ced2da] bg-[#dfe3eb]">
      <div className="mt-[5px] h-[2px] w-[9px] bg-[#666]" />
      <svg className="mt-[4px]" width="12" height="12" viewBox="0 0 12 12" fill="#fff" stroke="#666"><path d="M.5 3.500 3 .5l2 2.500h6.500v8H.5z" /><path d="M3 5l6 4M9 5 3 9" /></svg>
      <div className="mt-[3px] h-px w-full bg-[#b9bec8]" />
      <svg className="mt-[5px]" width="9" height="5" viewBox="0 0 9 5"><path d="M0 5h9L4.500 0z" fill="#444" /></svg>
      <div className="mt-[615px] flex h-[29px] w-[16px] flex-col items-center justify-center gap-[1px] border border-[#8b91a0] bg-linear-to-r from-white to-[#e1e5ec]">
        <div className="h-px w-[8px] bg-[#888]" /><div className="h-px w-[8px] bg-[#888]" /><div className="h-px w-[8px] bg-[#888]" /><div className="h-px w-[8px] bg-[#888]" />
      </div>
      <svg className="mt-[128px]" width="9" height="5" viewBox="0 0 9 5"><path d="M0 0h9L4.500 5z" fill="#444" /></svg>
      <div className="mt-[5px] h-px w-full bg-[#b9bec8]" />
      <svg className="mt-[5px]" width="6" height="7" viewBox="0 0 6 7"><path d="M0 3.500 3 0l3 3.500zM0 7l3-3.500L6 7z" fill="#333" /></svg>
      <div className="mt-[10px] size-[7px] rounded-full border border-[#555] bg-[#cfd3da]" />
      <svg className="mt-[10px]" width="6" height="7" viewBox="0 0 6 7"><path d="M0 0h6L3 3.500zM0 3.500h6L3 7z" fill="#333" /></svg>
    </div>
  );
}

/* ---------- status bar ---------- */

function StatusSep() {
  return <div className="h-[20px] w-px bg-[#8d9299] shadow-[1px_0_0_#f4f5f7]" />;
}

function StatusBar() {
  return (
    <div className="flex h-[22px] items-center border-t border-[#8d95a3] bg-linear-to-b from-[#e3e6ea] to-[#bdc1c7] pb-[2px] text-[12px] whitespace-nowrap text-[#3c3c3c]">
      <div className="w-[86px] pl-[8px]">頁面: 17 / 20</div>
      <StatusSep />
      <div className="w-[79px] pl-[9px]">字數: 5,342</div>
      <StatusSep />
      <div className="flex w-[41px] pl-[8px]">
        <svg width="17" height="15" viewBox="0 0 17 15"><path d="M1 9l6-4 8 3-7 6z" fill="#e9eef8" stroke="#4b67a0" /><path d="M1 9v2l7 4 7-5V8" fill="#6f8cc4" stroke="#4b67a0" /><path d="M8 1l7 7M15 0 9 8" stroke="#e0381e" strokeWidth="2.400" /></svg>
      </div>
      <div className="w-[69px]">中文 (台灣)</div>
      <StatusSep />
      <div className="w-[42px] pl-[8px]">取代</div>
      <StatusSep />
      <div className="flex-1" />
      <StatusSep />
      <div className="ml-[4px] flex h-[19px] w-[19px] items-center justify-center rounded-[2px] border border-[#c28a2c] bg-[#fcd96c]">
        <svg width="12" height="11" viewBox="0 0 12 11"><path d="M.5.5h11v10H.5z" fill="#fff" stroke="#555" /><path d="M2 2.500h8M2 4.500h8M2 6.500h8M2 8.500h8" stroke="#777" /></svg>
      </div>
      <svg className="ml-[4px]" width="11" height="11" viewBox="0 0 11 11" fill="#fff" stroke="#555"><path d="M.5.500 5.500 2l5-1.500v8.500L5.500 10.500.5 9zM5.500 2v8.500M2 3.500l2 .5M2 6l2 .5M7 4l2-.5M7 6.500l2-.5" /></svg>
      <svg className="ml-[6px]" width="12" height="12" viewBox="0 0 12 12"><path d="M.5.500h9v9h-9zM2 2.500h6M2 4.500h6M2 6.500h4" fill="#fff" stroke="#555" /><circle cx="8.500" cy="8.500" r="3.200" fill="#2c6fb0" /><path d="M7 7l3 2" stroke="#4fae5a" strokeWidth="1.600" /></svg>
      <svg className="ml-[7px]" width="10" height="9" viewBox="0 0 10 9" stroke="#777"><path d="M0 .5h6M2 2.500h7M4 4.500h5M4 6.500h5M1 8.500h8" /></svg>
      <svg className="ml-[9px]" width="10" height="9" viewBox="0 0 10 9" stroke="#666"><path d="M0 .5h10M0 2.500h10M0 4.500h10M0 6.500h10M0 8.500h10" /></svg>
      <span className="ml-[14px] w-[40px] text-[12.500px]">100%</span>
      <div className="flex size-[16px] items-center justify-center rounded-full border border-[#6f747c] bg-white"><Minus size={10} strokeWidth={4} color="#444" /></div>
      <div className="h-px w-[46px] bg-[#84888f]" />
      <svg width="9" height="13" viewBox="0 0 9 13"><path d="M.5.500h8v8L4.500 12.500.5 8.500z" fill="#fff" stroke="#6f747c" /></svg>
      <div className="h-px w-[45px] bg-[#84888f]" />
      <div className="mr-[4px] flex size-[16px] items-center justify-center rounded-full border border-[#6f747c] bg-white">
        <svg width="8" height="8" viewBox="0 0 8 8" stroke="#444" strokeWidth="2"><path d="M4 0v8M0 4h8" /></svg>
      </div>
    </div>
  );
}

/* ---------- taskbar ---------- */

function Task({ run, active, split, first, children }) {
  return (
    <div className={"flex h-[40px] shrink-0 flex-col items-center " + (first ? "w-[48px] " : "w-[49px] ") + (active ? "bg-[#3a3b3f]" : "")}>
      <div className="flex h-[38px] w-full items-center justify-center">{children}</div>
      {run && (
        <div className={"flex h-[2px] " + (active ? "w-full" : "w-[40px]")}>
          <div className="flex-1 bg-[#76b9ed]" />
          {split && <div className={(active ? "w-[3px]" : "w-[8px]") + " bg-[#527fa6]"} />}
        </div>
      )}
    </div>
  );
}

function WFIcon() {
  return (
    <svg width="24" height="24" viewBox="0 0 24 24">
      <rect width="24" height="24" rx="3" fill="#e6e3ec" />
      <path d="M0 3a3 3 0 0 1 3-3h18a3 3 0 0 1 3 3v12H0z" fill="#8069d6" />
      <text x="12" y="13" textAnchor="middle" fontSize="13" textLength="19" lengthAdjust="spacingAndGlyphs" fontFamily="Open Sans" fill="#fff">WF</text>
      <path d="M3 17h4l1 2 1-2h3l-4 6z" fill="#d3202c" />
      <text x="12.500" y="22" fontSize="5" fontFamily="Noto Sans CJK TC" fontWeight="bold" fill="#c0303a">鼎新</text>
    </svg>
  );
}

function Wallpaper() {
  return (
    <svg className="block shrink-0" width="586" height="40" viewBox="0 0 586 40">
      <defs>
        <linearGradient id="wall" x1="0" x2="1">
          <stop offset="0" stopColor="#0b0e16" /><stop offset=".05" stopColor="#1c0f10" /><stop offset=".14" stopColor="#1b1616" />
          <stop offset=".25" stopColor="#1f1a19" /><stop offset=".29" stopColor="#0b0f17" /><stop offset=".66" stopColor="#0a0e16" />
          <stop offset=".72" stopColor="#121416" /><stop offset=".9" stopColor="#15181a" /><stop offset="1" stopColor="#17191a" />
        </linearGradient>
      </defs>
      <path d="M0 0h586v40H0z" fill="url(#wall)" />
      <path d="M154 7c-20 4-32 13-36 25 16 0 28-7 36-25z" fill="#090e1a" />
      <path d="M165 0h8l6 40h-10z" fill="#060808" />
      <path d="M242 0h74c1 14 0 28-8 34-16 8-40 7-54 2-12-6-15-22-12-36z" fill="#221f16" />
      <path d="M262 20c8 11 30 10 40-8" fill="none" stroke="#0c0a07" strokeWidth="3" strokeDasharray="4 1" />
      <path d="M378 0c10 10 6 28-2 40" fill="none" stroke="#1c222c" strokeDasharray="2 2" />
      <path d="M392 0h26l10 12-14 20-24-8z" fill="#0c0b0f" />
    </svg>
  );
}

function Taskbar() {
  return (
    <div className="flex h-[40px] overflow-hidden bg-black text-white">
      <Task first><svg width="16" height="16" viewBox="0 0 16 16" fill="#fff"><path d="M0 2.300 6.500 1.400v6.200H0zM7.300 1.300 16 0v7.600H7.300zM0 8.400h6.500v6.200L0 13.700zM7.300 8.400H16V16l-8.700-1.300z" /></svg></Task>
      <Task><Search size={17} strokeWidth={2} className="-scale-x-100" /></Task>
      <Task><svg width="20" height="16" viewBox="0 0 20 16" fill="none" stroke="#fff" strokeWidth="1.300"><path d="M5 1h10v14H5zM2.500 3H.7v10h1.800M17.500 3h1.800v10h-1.800" /></svg></Task>
      <Task run split>
        <svg width="22" height="20" viewBox="0 0 22 20"><path d="M0 1h8l2 2h11v15H0z" fill="#f8d775" /><path d="M0 6h22v12H0z" fill="#fde294" /><path d="M3 10h16v9h-4v-4H7v4H3z" fill="#3fa9e0" /></svg>
      </Task>
      <Task>
        <svg width="24" height="24" viewBox="0 0 24 24"><path d="M1 7h22v16H1z" fill="#fff" /><path d="M8 7V3.500C8 1 16 1 16 3.500V7M10 7V4.500C10 3 15 3 15 4.500V7" fill="none" stroke="#fff" strokeWidth="1.200" /><path d="M6.500 9.500h5v5h-5z" fill="#f25022" /><path d="M12.500 9.500h5v5h-5z" fill="#7fba00" /><path d="M6.500 15.500h5v5h-5z" fill="#00a4ef" /><path d="M12.500 15.500h5v5h-5z" fill="#ffb900" /></svg>
      </Task>
      <Task><svg width="24" height="20" viewBox="0 0 24 20"><path d="M0 6 12 0l12 6v13H0z" fill="#fff" /><path d="M1 6h22l-9 5 3 4-7-4z" fill="#000" /></svg></Task>
      <Task>
        <div className="flex size-[23px] items-center justify-center bg-[#0c0c0c]">
          <svg width="20" height="20" viewBox="0 0 20 20"><path d="M19 6c-4 1-6 0-8-1-4-1-7 1-8 4-1 4 1 9 6 10 5 1 9-3 8-7l-6-1 1-2 8 .500-2-3z" fill="#c8161d" /><path d="M4 4c3-2 5-1 7-3l1 3c-3-1-5 0-8 0z" fill="#c8161d" /><path d="M13 8c-4-2-7 0-7 3.500S9 17 12 15.500l1-2-2.500-.5" fill="none" stroke="#0c0c0c" strokeWidth="1.600" /></svg>
        </div>
      </Task>
      <Task run split>
        <svg width="22" height="22" viewBox="0 0 22 22"><circle cx="11" cy="11" r="11" fill="#f6c624" /><path d="M11 11 1.500 5.500A11 11 0 0 1 20.500 5.500H11z" fill="#dc3f34" /><path d="M1.500 5.500A11 11 0 0 0 11 22l4.800-8.300L11 11z" fill="#3ca357" /><circle cx="11" cy="11" r="5.200" fill="#fff" /><circle cx="11" cy="11" r="4.100" fill="#4688f1" /></svg>
      </Task>
      <Task run>
        <svg width="24" height="24" viewBox="0 0 24 24"><rect width="24" height="24" fill="#0f6fd1" /><circle cx="12" cy="12" r="9.800" fill="#fff" /><path d="M3.500 12 8 8.500v2.300h8V8.500l4.500 3.500L16 15.500v-2.300H8v2.300z" fill="#0f6fd1" /></svg>
      </Task>
      <Task run>
        <svg width="22" height="22" viewBox="0 0 22 22"><path d="M7 1h12l-4 17H0z" fill="#4e9fb2" stroke="#dfe9ec" /><path d="m7.500 2 10.500 0-2 8c-3-3-7-3-10-3z" fill="#b5dfe8" /><path d="M19 1l3 16-5 4-2-3z" fill="#c4c8ca" /></svg>
      </Task>
      <Task run>
        <svg width="22" height="22" viewBox="0 0 22 22"><path d="M1 10C2 3.500 6.500.5 11.500.5 17.500.5 21 5 21 10v2.500H7.500c.3 5.500 7.500 6 12 3v4.500C12 23.500 3 21 3 13.500 3 9.500 5.500 7 8.500 5.800 5 6 2.500 7.500 1 10zM7.700 9h7.600c0-4.500-7-4.500-7.600 0z" fill="#1180d8" /></svg>
      </Task>
      <Task run>
        <div className="flex h-[20px] w-[22px] items-center justify-center border-2 border-[#a4e400] bg-[#122304] font-['Open_Sans',sans-serif] text-[12px] leading-none font-bold text-[#a4f000]">
          <span className="-tracking-[0.500px]">Dw</span>
        </div>
      </Task>
      <Task run><WFIcon /></Task>
      <Task run split><WFIcon /></Task>
      <Task run active split>
        <svg width="23" height="22" viewBox="0 0 23 22">
          <path d="M3 1h17v19H3z" fill="#eef4fc" stroke="#3a74c4" />
          <path d="M16 9l6 4-2 8H11l2-6z" fill="#fff" stroke="#c9d6ea" strokeWidth=".6" />
          <path d="M1 3h4l1.500 9L9 3h3l2 9 2-9h3.500l-4 14h-3l-2-7-2.500 7H4z" fill="#1d66bd" />
        </svg>
      </Task>
      <Wallpaper />
      <div className="flex flex-1 items-center">
        <svg className="ml-[348px]" width="16" height="16" viewBox="0 0 16 16" fill="none" stroke="#fff" strokeWidth="1.200"><circle cx="11" cy="4" r="3" /><path d="M15.500 12c-.5-3-2-4.500-4.500-5" /><circle cx="5" cy="8" r="2.600" /><path d="M1 16c.5-4 2-5.300 4-5.300s3 1.300 3.500 5" /></svg>
        <svg className="ml-[21px]" width="13" height="7" viewBox="0 0 13 7" fill="none" stroke="#fff" strokeWidth="1.300"><path d="M.5 6.500 6.500.8l6 5.700" /></svg>
        <svg className="ml-[10px]" width="17" height="14" viewBox="0 0 17 14" fill="none" stroke="#fff" strokeWidth="1.100"><path d="M5 1.500h11v8H3.500V6M8 10v3M5 13h7M.5.500h4v4h-4zM2.500 4.500V13" /></svg>
        <svg className="ml-[6px]" width="17" height="14" viewBox="0 0 17 14" fill="none" stroke="#fff" strokeWidth="1.100"><path d="M.5 4.500h2.500L7 1v12L3 9.500H.5zM9 5c1 1 1 3 0 4" /><path d="M11 3c2 2.500 2 5.500 0 8M13.500 1c3 4 3 8 0 12" opacity=".5" /></svg>
        <span className="ml-[9px] w-[23px] text-[12px]">中</span>
        <div className="flex w-[62px] flex-col items-center text-[12px] leading-[18px] whitespace-nowrap"><span>上午 10:58</span><span className="tracking-[-0.100px]">2018/4/19</span></div>
        <div className="relative ml-[16px] h-[40px] w-[36px]">
          <svg className="absolute top-[12px] left-0" width="16" height="16" viewBox="0 0 16 16"><path d="M0 0h16v12H9l-4 4v-4H0z" fill="#fff" /><path d="M3 3.500h10M3 6.500h10M3 9.500h6" stroke="#000" /></svg>
          <div className="absolute top-[19px] left-[7px] flex size-[17px] items-center justify-center rounded-full border border-[#8a8a8a] bg-[#2b2b2b] text-[11px] leading-none font-bold">4</div>
        </div>
        <div className="h-full w-px bg-[#555]" />
      </div>
    </div>
  );
}

export default function App() {
  return (
    <div className="flex h-[1080px] w-[1920px] flex-col overflow-hidden bg-white font-['Open_Sans','Noto_Sans_CJK_TC',sans-serif]">
      <TitleBar />
      <TabBar />
      <Ribbon />
      <div className="flex h-[871px] bg-linear-to-b from-[#cdd1d6] to-[#b8bbbf]">
        <div className="flex pt-[4px]">
          <NavigationPane />
          <RecoveryPane />
        </div>
        <div className="flex flex-1 overflow-hidden">
          <Page />
        </div>
        <PageScroll />
      </div>
      <StatusBar />
      <Taskbar />
    </div>
  );
}
